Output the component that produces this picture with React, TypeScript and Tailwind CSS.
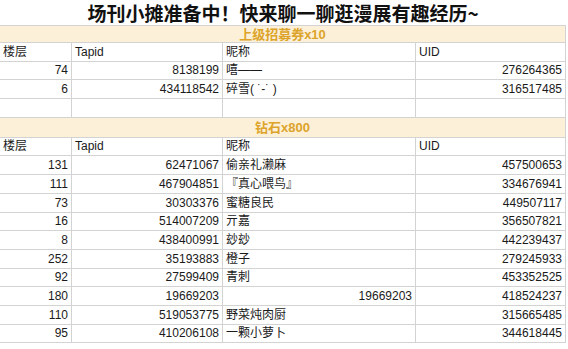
const font = "font-['Liberation_Sans','Noto_Sans_CJK_SC',sans-serif]";

type Row = { floor: string; tapid: string; nick: string; uid: string; nickNum?: boolean };

const giftRows: Row[] = [
  { floor: "74", tapid: "8138199", nick: "嘻——", uid: "276264365" },
  { floor: "6", tapid: "434118542", nick: "碎雪( ˙-˙ )", uid: "316517485" },
  { floor: "", tapid: "", nick: "", uid: "" },
];

const diamondRows: Row[] = [
  { floor: "131", tapid: "62471067", nick: "偷亲礼濑麻", uid: "457500653" },
  { floor: "111", tapid: "467904851", nick: "『真心喂鸟』", uid: "334676941" },
  { floor: "73", tapid: "30303376", nick: "蜜糖良民", uid: "449507117" },
  { floor: "16", tapid: "514007209", nick: "亓嘉", uid: "356507821" },
  { floor: "8", tapid: "438400991", nick: "玅玅", uid: "442239437" },
  { floor: "252", tapid: "35193883", nick: "橙子", uid: "279245933" },
  { floor: "92", tapid: "27599409", nick: "青刺", uid: "453352525" },
  { floor: "180", tapid: "19669203", nick: "19669203", uid: "418524237", nickNum: true },
  { floor: "110", tapid: "519053775", nick: "野菜炖肉厨", uid: "315665485" },
  { floor: "95", tapid: "410206108", nick: "一颗小萝卜", uid: "344618445" },
];

const rowCls =
  "grid grid-cols-[72px_151px_193px_150px] h-[18.7px] border-b border-[#d3d3d3] text-[12px] leading-none text-[#1a1a1a]";
const cell = "flex items-end pb-[3px] border-r border-[#d3d3d3] px-[3px] whitespace-nowrap";

function HeaderRow() {
  return (
    <div className={rowCls}>
      <div className={cell}>楼层</div>
      <div className={cell}>Tapid</div>
      <div className={cell}>昵称</div>
      <div className={cell}>UID</div>
    </div>
  );
}

function DataRow({ row }: { row: Row }) {
  return (
    <div className={rowCls}>
      <div className={`${cell} justify-end`}>{row.floor}</div>
      <div className={`${cell} justify-end`}>{row.tapid}</div>
      <div className={`${cell} ${row.nickNum ? "justify-end" : ""}`}>{row.nick}</div>
      <div className={`${cell} justify-end`}>{row.uid}</div>
    </div>
  );
}

function Band({ label, tall }: { label: string; tall?: boolean }) {
  return (
    <div
      className={`flex items-center justify-center bg-[#fcf0d8] border-b border-r border-[#d3d3d3] text-[13px] leading-none font-bold text-[#dca42a] ${
        tall ? "h-[20px]" : "h-[17px]"
      }`}
    >
      {label}
    </div>
  );
}

export default function App() {
  return (
    <div className={`w-[568px] h-[349px] overflow-hidden bg-white ${font}`}>
      <div className="w-[566px]">
        <div className="h-[26px] flex items-center justify-center border-b border-[#d3d3d3] text-[19px] leading-none font-bold text-[#111] font-['Noto_Sans_CJK_SC',sans-serif]">
          场刊小摊准备中！快来聊一聊逛漫展有趣经历~
        </div>
        <Band label="上级招募券x10" />
        <HeaderRow />
        {giftRows.map((r, i) => (
          <DataRow key={i} row={r} />
        ))}
        <Band label="钻石x800" tall />
        <HeaderRow />
        {diamondRows.map((r, i) => (
          <DataRow key={i} row={r} />
        ))}
      </div>
    </div>
  );
}
